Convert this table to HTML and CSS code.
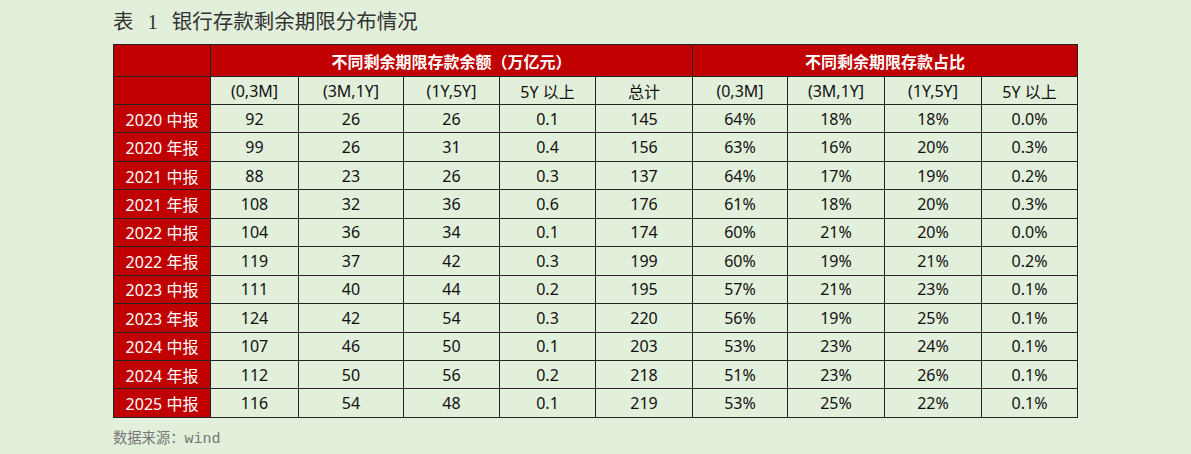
FILE: index.html
```html
<!DOCTYPE html>
<html lang="zh">
<head>
<meta charset="utf-8">
<link rel="stylesheet" href="styles.css">
</head>
<body>
<div class="page">
  <h1 class="title"><span class="t-biao">表</span><span class="t-num">1</span><span>银行存款剩余期限分布情况</span></h1>
  <table class="grid">
    <colgroup>
      <col style="width:97px"><col style="width:88px"><col style="width:105px"><col style="width:96px"><col style="width:96px"><col style="width:97px"><col style="width:95px"><col style="width:97px"><col style="width:97px"><col style="width:96px">
    </colgroup>
    <thead>
      <tr class="h1">
        <th class="red"></th>
        <th class="red" colspan="5">不同剩余期限存款余额（万亿元）</th>
        <th class="red" colspan="4">不同剩余期限存款占比</th>
      </tr>
      <tr class="h2">
        <th class="red"></th>
        <th>(0,3M]</th><th>(3M,1Y]</th><th>(1Y,5Y]</th><th>5Y 以上</th><th>总计</th>
        <th>(0,3M]</th><th>(3M,1Y]</th><th>(1Y,5Y]</th><th>5Y 以上</th>
      </tr>
    </thead>
    <tbody>
      <tr><th class="red">2020 中报</th><td>92</td><td>26</td><td>26</td><td>0.1</td><td>145</td><td>64%</td><td>18%</td><td>18%</td><td>0.0%</td></tr>
      <tr><th class="red">2020 年报</th><td>99</td><td>26</td><td>31</td><td>0.4</td><td>156</td><td>63%</td><td>16%</td><td>20%</td><td>0.3%</td></tr>
      <tr><th class="red">2021 中报</th><td>88</td><td>23</td><td>26</td><td>0.3</td><td>137</td><td>64%</td><td>17%</td><td>19%</td><td>0.2%</td></tr>
      <tr><th class="red">2021 年报</th><td>108</td><td>32</td><td>36</td><td>0.6</td><td>176</td><td>61%</td><td>18%</td><td>20%</td><td>0.3%</td></tr>
      <tr><th class="red">2022 中报</th><td>104</td><td>36</td><td>34</td><td>0.1</td><td>174</td><td>60%</td><td>21%</td><td>20%</td><td>0.0%</td></tr>
      <tr><th class="red">2022 年报</th><td>119</td><td>37</td><td>42</td><td>0.3</td><td>199</td><td>60%</td><td>19%</td><td>21%</td><td>0.2%</td></tr>
      <tr><th class="red">2023 中报</th><td>111</td><td>40</td><td>44</td><td>0.2</td><td>195</td><td>57%</td><td>21%</td><td>23%</td><td>0.1%</td></tr>
      <tr><th class="red">2023 年报</th><td>124</td><td>42</td><td>54</td><td>0.3</td><td>220</td><td>56%</td><td>19%</td><td>25%</td><td>0.1%</td></tr>
      <tr><th class="red">2024 中报</th><td>107</td><td>46</td><td>50</td><td>0.1</td><td>203</td><td>53%</td><td>23%</td><td>24%</td><td>0.1%</td></tr>
      <tr><th class="red">2024 年报</th><td>112</td><td>50</td><td>56</td><td>0.2</td><td>218</td><td>51%</td><td>23%</td><td>26%</td><td>0.1%</td></tr>
      <tr><th class="red">2025 中报</th><td>116</td><td>54</td><td>48</td><td>0.1</td><td>219</td><td>53%</td><td>25%</td><td>22%</td><td>0.1%</td></tr>
    </tbody>
  </table>
  <p class="source">数据来源：<span class="mono">wind</span></p>
</div>
</body>
</html>
```

FILE: styles.css
```css
html, body {
  margin: 0;
  padding: 0;
  background: #e2efda;
}
.page {
  padding: 4px 0 0 113px;
}
.title {
  margin: 0;
  height: 40px;
  font-family: "Noto Sans CJK SC", sans-serif;
  font-weight: 400;
  font-size: 20.5px;
  line-height: 32px;
  color: #333;
}
.t-num {
  font-family: "Liberation Serif", serif;
  margin: 0 14px;
}
.grid {
  border-collapse: collapse;
  table-layout: fixed;
  width: 964px;
  font-family: "Noto Sans", "Noto Sans CJK SC", sans-serif;
  font-size: 16px;
  color: #111;
}
.grid th, .grid td {
  border: 1px solid #222;
  padding: 0;
  text-align: center;
  font-weight: 400;
  white-space: nowrap;
}
.grid tr { height: 28.45px; }
.grid tr.h1 { height: 32px; }
.grid tr.h2 { height: 28px; }
.grid .red {
  background: #c00000;
  color: #fff;
}
.grid tr.h1 th {
  font-weight: 700;
  font-family: "Noto Sans CJK SC", sans-serif;
}
.source {
  margin: 8px 0 0 0;
  font-family: "Noto Sans CJK SC", sans-serif;
  font-size: 14.3px;
  color: #777;
}
.mono {
  font-family: "Liberation Mono", monospace;
  font-size: 15px;
}
```
